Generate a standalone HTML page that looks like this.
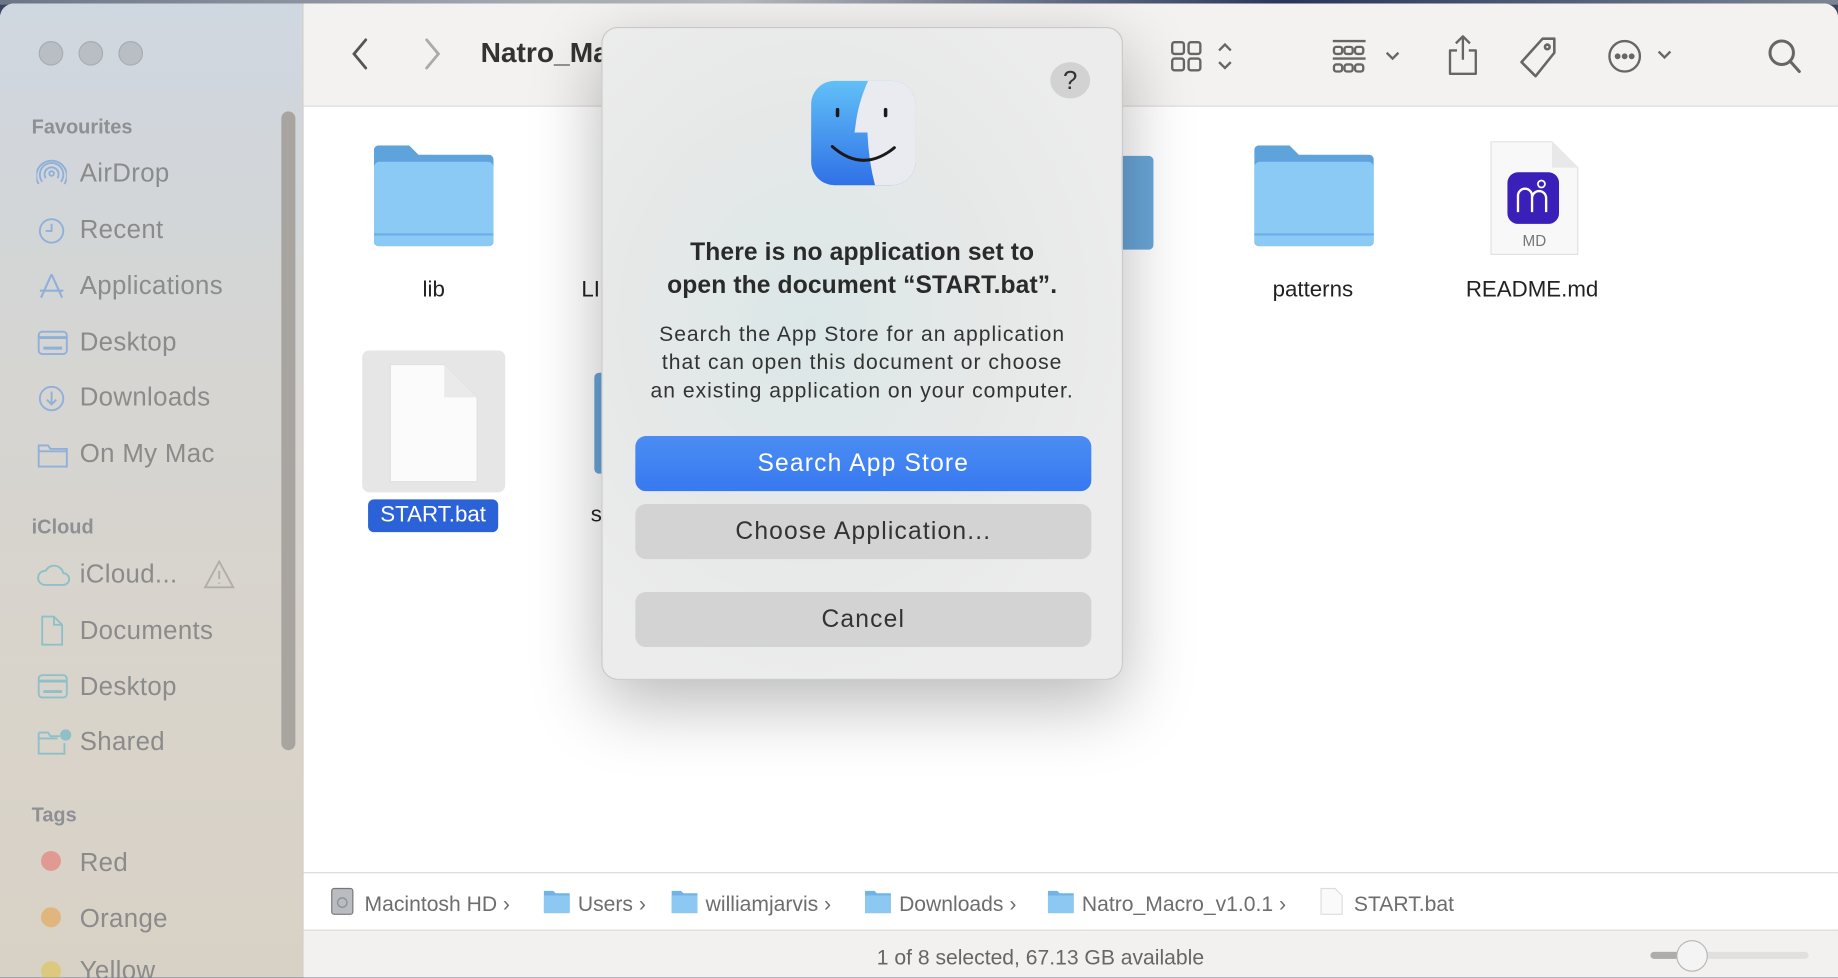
<!DOCTYPE html>
<html><head><meta charset="utf-8"><style>
*{margin:0;padding:0;box-sizing:border-box}
html,body{width:1838px;height:978px;overflow:hidden;background:#3a4660}
#s{position:absolute;left:0;top:0;width:1568px;height:834px;transform:scale(1.17219);transform-origin:0 0;font-family:"Liberation Sans",sans-serif}
.a{position:absolute;white-space:nowrap}
#win{position:absolute;left:0;top:3px;width:1568px;height:831px;border-radius:12px 12px 0 0;overflow:hidden;background:#fff}
#side{position:absolute;left:0;top:0;width:259px;height:831px;background:linear-gradient(180deg,#cfd7e0 0%,#d5d5d3 35%,#d9d4cb 70%,#d8d1c6 100%);border-right:1px solid #cfcac2}
.tl{position:absolute;top:32px;width:21px;height:21px;border-radius:50%;background:#b9bdc4;border:1px solid #a8acb3}
.hd{position:absolute;left:27px;font-size:17px;font-weight:bold;color:#8e9094}
.it{position:absolute;left:68px;font-size:22px;color:#8b8b8b;line-height:26px;letter-spacing:.3px}
.ic{position:absolute;left:31px}
#tb{position:absolute;left:259px;top:0;width:1309px;height:88px;background:#f3f2f0;border-bottom:1px solid #dcdcdc}
.lbl{position:absolute;font-size:19px;color:#222;text-align:center;line-height:22px}
.folder{position:absolute;width:102px;height:87px}
.btn{position:absolute;left:28px;width:389px;height:47px;border-radius:9px;text-align:center;line-height:47px;font-size:21px;letter-spacing:1px}
.pb{position:absolute;top:757px;font-size:18px;color:#6d6d6d;line-height:22px}
</style></head><body><div id="s">
<div style="position:absolute;left:0;top:0;width:1568px;height:4px;background:linear-gradient(90deg,#6a7688,#b9bcc0 40%,#27355a 70%,#7b8593)"></div>
<div id="win">
 <div id="side">
  <div class="tl" style="left:33px"></div><div class="tl" style="left:67px"></div><div class="tl" style="left:101px"></div>
  <div style="position:absolute;left:240px;top:92px;width:12px;height:545px;border-radius:6px;background:#a8a5a1"></div>
  <div class="hd" style="top:96px">Favourites</div>
  <svg class="ic" style="top:132px" width="26" height="26" viewBox="0 0 26 26" fill="none" stroke="#8fb0d8" stroke-width="1.6"><circle cx="13" cy="13" r="2"/><path d="M8 17a6 6 0 1 1 10 0M5 20a10 10 0 1 1 16 0M2 22a13 13 0 1 1 22 0"/></svg>
  <div class="it" style="top:132px">AirDrop</div>
  <svg class="ic" style="top:181px" width="26" height="26" fill="none" stroke="#8fb0d8" stroke-width="1.6"><circle cx="13" cy="13" r="10"/><path d="M13 7v6h-5"/></svg>
  <div class="it" style="top:180px">Recent</div>
  <svg class="ic" style="top:229px" width="26" height="26" fill="none" stroke="#8fb0d8" stroke-width="1.8"><path d="M13 2L4 22M13 2l9 20M3 16h20"/></svg>
  <div class="it" style="top:228px">Applications</div>
  <svg class="ic" style="top:277px" width="28" height="26" fill="none" stroke="#8fb0d8" stroke-width="1.6"><rect x="2" y="3" width="24" height="19" rx="3"/><path d="M2 8h24M6 17h16" stroke-width="2.5"/></svg>
  <div class="it" style="top:276px">Desktop</div>
  <svg class="ic" style="top:324px" width="26" height="26" fill="none" stroke="#8fb0d8" stroke-width="1.6"><circle cx="13" cy="13" r="10"/><path d="M13 7v11M9 14l4 4 4-4"/></svg>
  <div class="it" style="top:323px">Downloads</div>
  <svg class="ic" style="top:372px" width="28" height="26" fill="none" stroke="#8fb0d8" stroke-width="1.6"><path d="M2 5h8l2 3h14v15H2z M2 10h24"/></svg>
  <div class="it" style="top:371px">On My Mac</div>
  <div class="hd" style="top:437px">iCloud</div>
  <svg class="ic" style="top:476px" width="30" height="24" fill="none" stroke="#8fc0c8" stroke-width="1.6"><path d="M7 20h16a5 5 0 0 0 0-10 8 8 0 0 0-15-2A6 6 0 0 0 7 20z"/></svg>
  <div class="it" style="top:474px">iCloud...</div>
  <svg style="position:absolute;left:173px;top:474px" width="28" height="26" fill="none" stroke="#b0aeab" stroke-width="1.6"><path d="M14 2L2 24h24z M14 10v7 M14 20v1"/></svg>
  <svg class="ic" style="top:521px" width="26" height="28" fill="none" stroke="#8fc0c8" stroke-width="1.6"><path d="M5 2h10l7 7v17H5z M15 2v7h7"/></svg>
  <div class="it" style="top:522px">Documents</div>
  <svg class="ic" style="top:570px" width="28" height="26" fill="none" stroke="#8fc0c8" stroke-width="1.6"><rect x="2" y="3" width="24" height="19" rx="3"/><path d="M2 8h24M6 17h16" stroke-width="2.5"/></svg>
  <div class="it" style="top:570px">Desktop</div>
  <svg class="ic" style="top:617px" width="30" height="26" fill="none" stroke="#8fc0c8" stroke-width="1.6"><path d="M2 5h8l2 3h8M2 10h16M2 5v18h22v-9"/><circle cx="25" cy="7" r="4" fill="#8fc0c8"/></svg>
  <div class="it" style="top:617px">Shared</div>
  <div class="hd" style="top:683px">Tags</div>
  <div style="position:absolute;left:35px;top:723px;width:17px;height:17px;border-radius:50%;background:#e19a92"></div>
  <div class="it" style="top:720px">Red</div>
  <div style="position:absolute;left:35px;top:771px;width:17px;height:17px;border-radius:50%;background:#e0b57e"></div>
  <div class="it" style="top:768px">Orange</div>
  <div style="position:absolute;left:35px;top:817px;width:17px;height:17px;border-radius:50%;background:#dcc97e"></div>
  <div class="it" style="top:812px">Yellow</div>
 </div>
 <div id="tb">
  <svg class="a" style="left:38px;top:28px" width="20" height="30" fill="none" stroke="#555" stroke-width="2.4" stroke-linecap="round"><path d="M15 3L5 15l10 12"/></svg>
  <svg class="a" style="left:100px;top:28px" width="20" height="30" fill="none" stroke="#aaa" stroke-width="2.4" stroke-linecap="round"><path d="M5 3l10 12-10 12"/></svg>
  <div class="a" style="left:151px;top:29px;font-size:24px;font-weight:bold;color:#333">Natro_Macro_v1.0.1</div>
  <svg class="a" style="left:738px;top:30px" width="60" height="30" fill="none" stroke="#666" stroke-width="2"><rect x="3" y="3" width="10" height="10" rx="2"/><rect x="17" y="3" width="10" height="10" rx="2"/><rect x="3" y="17" width="10" height="10" rx="2"/><rect x="17" y="17" width="10" height="10" rx="2"/><path d="M43 10l5-5 5 5M43 20l5 5 5-5"/></svg>
  <svg class="a" style="left:876px;top:30px" width="70" height="32" fill="none" stroke="#666" stroke-width="2"><path d="M2 2h28M2 17h28"/><rect x="3" y="7" width="7" height="6" rx="2"/><rect x="12" y="7" width="7" height="6" rx="2"/><rect x="21" y="7" width="7" height="6" rx="2"/><rect x="3" y="22" width="7" height="6" rx="2"/><rect x="12" y="22" width="7" height="6" rx="2"/><rect x="21" y="22" width="7" height="6" rx="2"/><path d="M48 12l5 5 5-5"/></svg>
  <svg class="a" style="left:974px;top:25px" width="30" height="40" fill="none" stroke="#666" stroke-width="2" stroke-linejoin="round"><path d="M15 3v20M9 9l6-6 6 6M10 15H4v20h22V15h-6"/></svg>
  <svg class="a" style="left:1037px;top:26px" width="36" height="40" fill="none" stroke="#666" stroke-width="2.2" stroke-linejoin="round"><path d="M20 4h10v12L14 36 2 24z"/><circle cx="24" cy="11" r="2"/></svg>
  <svg class="a" style="left:1110px;top:29px" width="60" height="34" fill="none" stroke="#666" stroke-width="2"><circle cx="17" cy="16" r="13"/><circle cx="11" cy="16" r="1.5" fill="#666"/><circle cx="17" cy="16" r="1.5" fill="#666"/><circle cx="23" cy="16" r="1.5" fill="#666"/><path d="M46 12l5 5 5-5"/></svg>
  <svg class="a" style="left:1248px;top:29px" width="32" height="34" fill="none" stroke="#666" stroke-width="2.6" stroke-linecap="round"><circle cx="13" cy="13" r="10"/><path d="M20 20l8 9"/></svg>
 </div>
 <!-- content -->
 <svg class="folder" style="left:319px;top:121px" viewBox="0 0 102 87"><path d="M4 0h26l8 8h60a4 4 0 0 1 4 4v70a4 4 0 0 1-4 4H4a4 4 0 0 1-4-4V4a4 4 0 0 1 4-4z" fill="#5fa3dd"/><rect x="0" y="14" width="102" height="72" rx="5" fill="#8bcaf4"/><path d="M0 76h102" stroke="#6fb0e6" stroke-width="2"/></svg>
 <div class="lbl" style="left:320px;top:234px;width:100px">lib</div>
 <div class="lbl" style="left:496px;top:234px">LI</div>
 <svg class="folder" style="left:1070px;top:121px" viewBox="0 0 102 87"><path d="M4 0h26l8 8h60a4 4 0 0 1 4 4v70a4 4 0 0 1-4 4H4a4 4 0 0 1-4-4V4a4 4 0 0 1 4-4z" fill="#5fa3dd"/><rect x="0" y="14" width="102" height="72" rx="5" fill="#8bcaf4"/><path d="M0 76h102" stroke="#6fb0e6" stroke-width="2"/></svg>
 <div style="position:absolute;left:930px;top:130px;width:54px;height:80px;border-radius:4px;background:#6aa6d8"></div>
 <div class="lbl" style="left:1070px;top:234px;width:100px">patterns</div>
 <svg class="a" style="left:1269px;top:116px" width="80" height="102"><path d="M3 2h52l22 22v74H3z" fill="#f8f8f8" stroke="#e2e2e2"/><path d="M55 2v22h22" fill="#e8e8e8"/><rect x="17" y="28" width="44" height="44" rx="9" fill="#3a1fb8"/><path d="M26 62V48a6 6 0 0 1 12 0v14M38 50a6 6 0 0 1 12 0v12" fill="none" stroke="#fff" stroke-width="2"/><circle cx="46" cy="38" r="3" fill="none" stroke="#fff" stroke-width="1.5"/><text x="40" y="91" font-size="13" fill="#777" text-anchor="middle" font-family="Liberation Sans">MD</text></svg>
 <div class="lbl" style="left:1237px;top:234px;width:140px">README.md</div>
 <div style="position:absolute;left:309px;top:296px;width:122px;height:121px;border-radius:6px;background:#e6e6e6"></div>
 <svg class="a" style="left:330px;top:306px" width="80" height="106"><path d="M3 2h46l28 28v72H3z" fill="#fbfbfb" stroke="#e0e0e0"/><path d="M49 2v28h28" fill="#eaeaea"/></svg>
 <div style="position:absolute;left:314px;top:423px;width:111px;height:28px;border-radius:5px;background:#2c62d8;color:#fff;font-size:19px;text-align:center;line-height:28px">START.bat</div>
 <div style="position:absolute;left:507px;top:315px;width:10px;height:86px;border-radius:4px 0 0 4px;background:#6aa6d8"></div>
 <div class="lbl" style="left:504px;top:426px">s</div>
 <!-- path bar -->
 <div style="position:absolute;left:259px;top:741px;width:1309px;height:1px;background:#dadada"></div>
 <svg class="a" style="left:281px;top:754px" width="22" height="24"><rect x="2" y="1" width="18" height="22" rx="2" fill="#b9bcc0" stroke="#777"/><circle cx="11" cy="13" r="4" fill="none" stroke="#888"/></svg>
 <div class="pb" style="left:311px">Macintosh HD ›</div>
 <svg class="a" style="left:463px;top:755px" width="24" height="22"><path d="M1 2h8l2 2h12v17H1z" fill="#6fb3e8"/><rect x="1" y="6" width="22" height="15" rx="1" fill="#8cc8f2"/></svg>
 <div class="pb" style="left:493px">Users ›</div>
 <svg class="a" style="left:572px;top:755px" width="24" height="22"><path d="M1 2h8l2 2h12v17H1z" fill="#6fb3e8"/><rect x="1" y="6" width="22" height="15" rx="1" fill="#8cc8f2"/></svg>
 <div class="pb" style="left:602px">williamjarvis ›</div>
 <svg class="a" style="left:737px;top:755px" width="24" height="22"><path d="M1 2h8l2 2h12v17H1z" fill="#6fb3e8"/><rect x="1" y="6" width="22" height="15" rx="1" fill="#8cc8f2"/></svg>
 <div class="pb" style="left:767px">Downloads ›</div>
 <svg class="a" style="left:893px;top:755px" width="24" height="22"><path d="M1 2h8l2 2h12v17H1z" fill="#6fb3e8"/><rect x="1" y="6" width="22" height="15" rx="1" fill="#8cc8f2"/></svg>
 <div class="pb" style="left:923px">Natro_Macro_v1.0.1 ›</div>
 <svg class="a" style="left:1126px;top:754px" width="20" height="24"><path d="M1 1h12l6 6v16H1z" fill="#fafafa" stroke="#ddd"/></svg>
 <div class="pb" style="left:1155px">START.bat</div>
 <div style="position:absolute;left:259px;top:790px;width:1309px;height:41px;background:#f2f1ef;border-top:1px solid #dadada"></div>
 <div class="a" style="left:748px;top:804px;font-size:18px;color:#666">1 of 8 selected, 67.13 GB available</div>
 <div style="position:absolute;left:1408px;top:809px;width:135px;height:6px;border-radius:3px;background:#e0e0e0"></div>
 <div style="position:absolute;left:1408px;top:809px;width:30px;height:6px;border-radius:3px;background:#acacac"></div>
 <div style="position:absolute;left:1430px;top:799px;width:27px;height:27px;border-radius:50%;background:#f4f4f4;border:1.5px solid #b6b6b6"></div>
</div>
<!-- dialog -->
<div style="position:absolute;left:513px;top:23px;width:445px;height:557px;border-radius:14px;background:radial-gradient(ellipse at 40% 45%,#dbe7e7 0%,#e6e8e8 40%,#ececec 75%);border:1px solid #c8c8c8;box-shadow:0 20px 60px rgba(0,0,0,.28)">
 <svg class="a" style="left:177px;top:44px" width="91" height="92"><defs><linearGradient id="g" x1="0" y1="0" x2="0" y2="1"><stop offset="0" stop-color="#62c1f7"/><stop offset="1" stop-color="#2e6fe6"/></linearGradient><clipPath id="c"><rect x="1" y="1" width="89" height="89" rx="20"/></clipPath></defs><g clip-path="url(#c)"><rect width="91" height="92" fill="url(#g)"/><path d="M50 0Q41 20 39 38L38 45L49 45Q50 70 56 92H91V0z" fill="#e9ebf0"/></g><rect x="22" y="24" width="3" height="8" rx="1.5" fill="#1a1a1a"/><rect x="63" y="24" width="3" height="8" rx="1.5" fill="#1a1a1a"/><path d="M19 57Q45 80 72 58" fill="none" stroke="#1a1a1a" stroke-width="2.5" stroke-linecap="round"/></svg>
 <div style="position:absolute;left:382px;top:29px;width:34px;height:31px;border-radius:50%;background:#d2d2d2;text-align:center;line-height:31px;font-size:22px;color:#333">?</div>
 <div class="a" style="left:0;width:443px;top:178px;text-align:center;font-size:21px;font-weight:bold;color:#2a2a2a;line-height:28px;letter-spacing:.1px">There is no application set to<br>open the document “START.bat”.</div>
 <div class="a" style="left:0;width:443px;top:249px;text-align:center;font-size:18px;color:#333;line-height:24px;letter-spacing:.85px">Search the App Store for an application<br>that can open this document or choose<br>an existing application on your computer.</div>
 <div class="btn" style="top:348px;background:linear-gradient(#4b8df3,#3779f0);color:#fff">Search App Store</div>
 <div class="btn" style="top:406px;background:#d3d3d3;color:#333">Choose Application...</div>
 <div class="btn" style="top:481px;background:#d3d3d3;color:#333">Cancel</div>
</div>
</div></body></html>
